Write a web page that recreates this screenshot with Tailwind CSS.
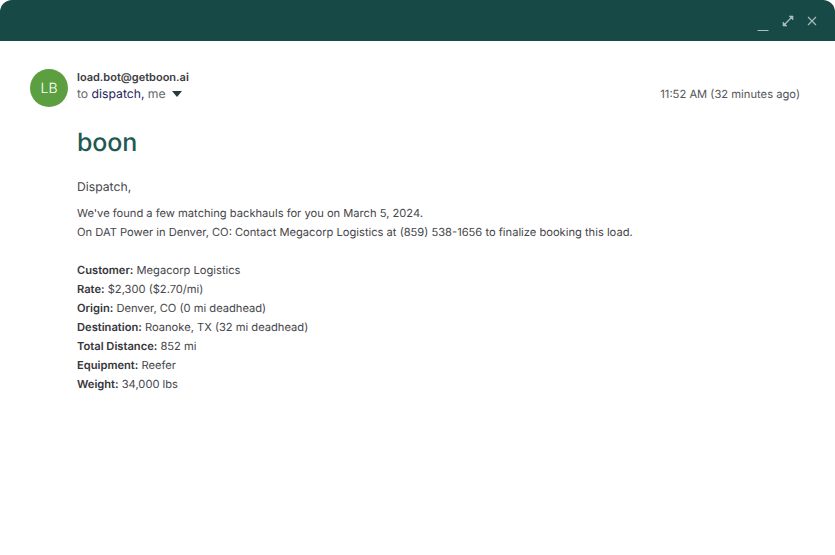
<!DOCTYPE html>
<html lang="en">
<head>
    <meta charset="UTF-8">
    <title>Email</title>
    <script src="https://cdn.jsdelivr.net/npm/@tailwindcss/browser@4"></script>
</head>
<body class="bg-white font-['Inter',sans-serif] text-[#46464b] overflow-hidden [text-rendering:geometricPrecision]">
    <div class="w-[835px] h-[555px] bg-white">
        <!-- Title bar -->
        <header class="h-[41px] bg-[#174a46] rounded-t-[12px] flex items-center justify-end text-[#a9bfbc]">
            <svg class="w-[12px] h-[12px] mr-[13px] mt-[10px]" viewBox="0 0 12 12" fill="none" stroke="currentColor" stroke-width="1"><path d="M0.5 10.5H11.5"/></svg>
            <svg class="w-[12px] h-[12px] mr-[13px]" viewBox="0 0 12 12" fill="none" stroke="currentColor" stroke-width="1.2"><path d="M1.5 10.5L10.5 1.5"/><path d="M7 1H11V5Z M1 7V11H5Z" fill="currentColor" stroke-width="0.6"/></svg>
            <svg class="w-[10px] h-[10px] mr-[18px]" viewBox="0 0 10 10" fill="none" stroke="currentColor" stroke-width="1.1"><path d="M1 1L9 9M9 1L1 9"/></svg>
        </header>

        <main class="relative">
            <!-- Sender row -->
            <div class="flex pt-[28px] pl-[30px] pr-[35px]">
                <div class="w-[38px] h-[38px] rounded-full bg-[#5c9f41] text-white text-[14px] font-light flex items-center justify-center shrink-0">LB</div>
                <div class="ml-[9px] flex-1">
                    <div class="text-[11px] leading-[16px] font-semibold text-[#3a3a40]">load.bot@getboon.ai</div>
                    <div class="text-[12.2px] leading-[18px] flex items-center text-[#66666c]">
                        <span>to&nbsp;</span><span class="text-[#24245a]">dispatch,</span><span>&nbsp;me</span>
                        <svg class="w-[10px] h-[6px] ml-[6px]" viewBox="0 0 10 6"><path d="M0 0H10L5 6Z" fill="#2a3a3c"/></svg>
                    </div>
                </div>
                <div class="text-[11.2px] leading-[16px] mt-[17px] text-[#55555a]">11:52 AM (32 minutes ago)</div>
            </div>

            <!-- Body -->
            <div class="pl-[77px] mt-[17px]">
                <div class="text-[25px] leading-[38px] font-medium text-[#1f5a52] tracking-[-0.1px]">boon</div>
                <p class="text-[12.2px] leading-[18px] mt-[16px]">Dispatch,</p>
                <div class="text-[11.15px] leading-[19px] mt-[8px]">
                    <p>We've found a few matching backhauls for you on March 5, 2024.</p>
                    <p>On DAT Power in Denver, CO: Contact Megacorp Logistics at (859) 538-1656 to finalize booking this load.</p>
                </div>
                <ul class="text-[11.15px] leading-[19px] mt-[19px]">
                    <li><b class="font-semibold text-[#36363b]">Customer:</b> Megacorp Logistics</li>
                    <li><b class="font-semibold text-[#36363b]">Rate:</b> $2,300 ($2.70/mi)</li>
                    <li><b class="font-semibold text-[#36363b]">Origin:</b> Denver, CO (0 mi deadhead)</li>
                    <li><b class="font-semibold text-[#36363b]">Destination:</b> Roanoke, TX (32 mi deadhead)</li>
                    <li><b class="font-semibold text-[#36363b]">Total Distance:</b> 852 mi</li>
                    <li><b class="font-semibold text-[#36363b]">Equipment:</b> Reefer</li>
                    <li><b class="font-semibold text-[#36363b]">Weight:</b> 34,000 lbs</li>
                </ul>
            </div>
        </main>
    </div>
</body>
</html>
